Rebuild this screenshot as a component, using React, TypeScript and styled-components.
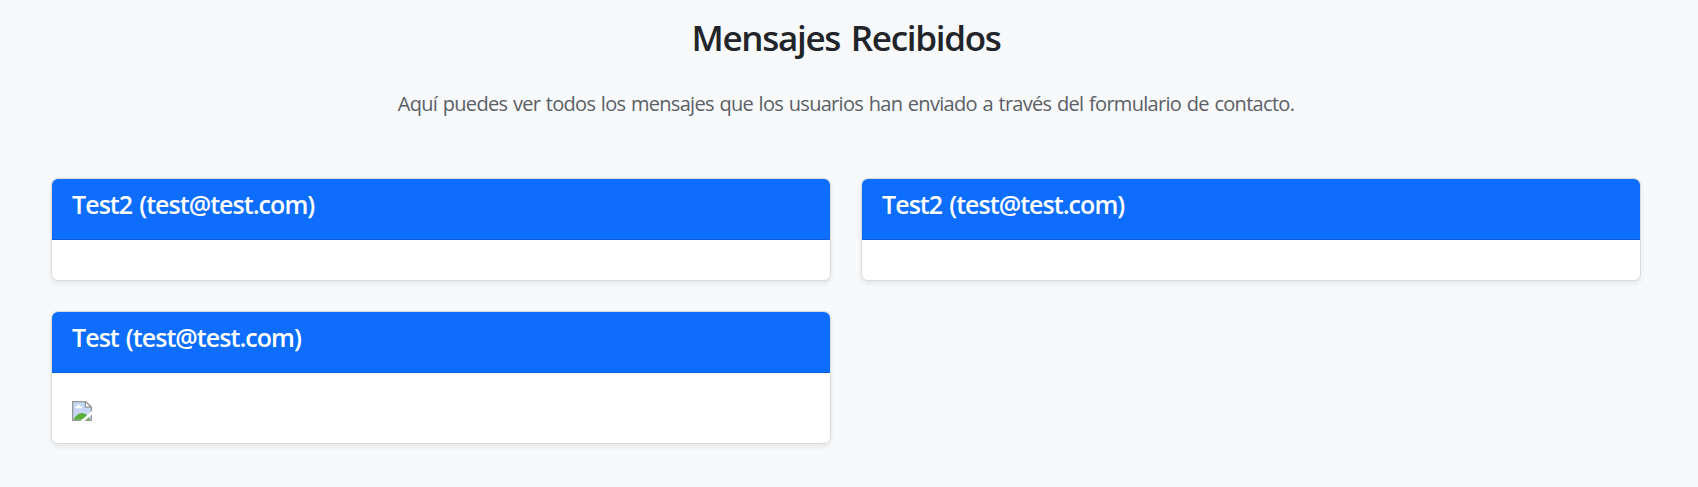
import React from "react";
import styled, { createGlobalStyle } from "styled-components";

const GlobalStyle = createGlobalStyle`
  *, *::before, *::after { box-sizing: border-box; }
  body {
    margin: 0;
    background: #f8f9fa;
    color: #212529;
    font-family: "Segoe UI", "Open Sans", "Noto Sans", sans-serif;
  }
`;

const Page = styled.main`
  min-height: 487px;
  padding: 17px 57px 0 51px;
`;

const Title = styled.h2`
  margin: 0;
  font-size: 35px;
  font-weight: 600;
  line-height: 42px;
  letter-spacing: -1.3px;
  word-spacing: 3px;
  text-align: center;
`;

const Lead = styled.p`
  margin: 30px 0 0;
  font-size: 20px;
  line-height: 30px;
  letter-spacing: -0.7px;
  word-spacing: 1.1px;
  color: #5a6066;
  text-align: center;
`;

const Grid = styled.section`
  display: grid;
  grid-template-columns: 1fr 1fr;
  align-items: start;
  gap: 30px;
  margin-top: 59px;
`;

const Card = styled.article`
  border: 1px solid #dadbdd;
  border-radius: 7px;
  background: #fff;
  overflow: hidden;
  box-shadow: 0 2.5px 5px rgba(0, 0, 0, 0.075);
`;

const CardHeader = styled.header`
  height: 61px;
  padding: 10px 20px;
  border-bottom: 1px solid #0b5ed7;
  background: #0d6efd;
  color: #fff;
`;

const Sender = styled.h5`
  margin: 0;
  font-size: 25px;
  font-weight: 600;
  line-height: 30px;
  letter-spacing: -0.95px;
  word-spacing: 1.5px;
`;

const CardBody = styled.div<{ $height: number }>`
  height: ${(p) => p.$height}px;
  padding: 28px 20px 0;
`;

const ImageIcon = styled.svg`
  display: block;
  width: 20px;
  height: 20px;
`;

function MissingImage() {
  return (
    <ImageIcon viewBox="0 0 20 20" aria-hidden="true">
      <path d="M.6.6H13.5L19.4 6.5V19.4H.6Z" fill="#c5d7f5" stroke="#979797" strokeWidth="1.3" />
      <path d="M3 7.2Q3.2 5.4 5 5.3Q6.5 2.6 8.2 5Q9.8 5 10 7.2Z" fill="#fff" />
      <path d="M1.5 18.7Q5 12 10 12Q15 12 18 18.7Z" fill="#5bae37" />
      <path d="M13.4 .6V6.2H19.4Z" fill="#fff" stroke="#979797" strokeWidth="1.3" />
      <path d="M20 10L8.4 20H12.4L20 13.6Z" fill="#fff" />
    </ImageIcon>
  );
}

const messages = [
  { id: 3, sender: "Test2 (test@test.com)", height: 40, image: false },
  { id: 2, sender: "Test2 (test@test.com)", height: 40, image: false },
  { id: 1, sender: "Test (test@test.com)", height: 70, image: true },
];

export default function App() {
  return (
    <>
      <GlobalStyle />
      <Page>
        <Title>Mensajes Recibidos</Title>
        <Lead>
          Aquí puedes ver todos los mensajes que los usuarios han enviado a través del formulario de contacto.
        </Lead>
        <Grid>
          {messages.map((m) => (
            <Card key={m.id}>
              <CardHeader>
                <Sender>{m.sender}</Sender>
              </CardHeader>
              <CardBody $height={m.height}>{m.image && <MissingImage />}</CardBody>
            </Card>
          ))}
        </Grid>
      </Page>
    </>
  );
}
